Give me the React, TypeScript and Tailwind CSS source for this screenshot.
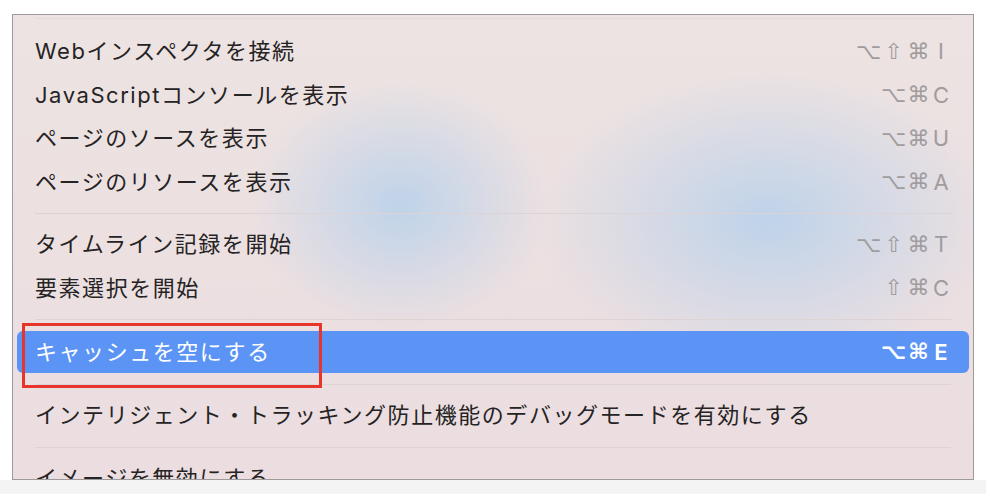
import type { ReactNode } from "react";

type Item = {
  label: string;
  keys: string[];
  active?: boolean;
};

const GROUPS: Item[][] = [
  [
    { label: "Webインスペクタを接続", keys: ["⌥", "⇧", "⌘", "I"] },
    { label: "JavaScriptコンソールを表示", keys: ["⌥", "⌘", "C"] },
    { label: "ページのソースを表示", keys: ["⌥", "⌘", "U"] },
    { label: "ページのリソースを表示", keys: ["⌥", "⌘", "A"] },
  ],
  [
    { label: "タイムライン記録を開始", keys: ["⌥", "⇧", "⌘", "T"] },
    { label: "要素選択を開始", keys: ["⇧", "⌘", "C"] },
  ],
  [{ label: "キャッシュを空にする", keys: ["⌥", "⌘", "E"], active: true }],
  [{ label: "インテリジェント・トラッキング防止機能のデバッグモードを有効にする", keys: [] }],
  [{ label: "イメージを無効にする", keys: [] }],
];

function Shortcut({ keys, active }: { keys: string[]; active?: boolean }) {
  const letter = keys[keys.length - 1];
  const mods = keys.slice(0, -1);
  return (
    <div className={`flex items-center tracking-normal ${active ? "text-white font-bold" : "text-[#a19b9d]"}`}>
      {mods.map((m, i) => (
        <span
          key={i}
          className="w-[25px] text-center leading-none font-['DejaVu_Sans',sans-serif] text-[22px]"
        >
          {m}
        </span>
      ))}
      <span
        className={`w-[20px] text-center font-['Inter',sans-serif] text-[22px] ${
          active ? "font-semibold" : ""
        }`}
      >
        {letter}
      </span>
    </div>
  );
}

function Row({ item }: { item: Item }) {
  if (item.active) {
    return (
      <div className="h-[46px] pt-[2px] px-[4px]">
        <div className="h-[42px] rounded-[6px] bg-[#5b94f5] flex items-center justify-between px-[18px]">
          <span className="text-white whitespace-nowrap">{item.label}</span>
          <Shortcut keys={item.keys} active />
        </div>
      </div>
    );
  }
  return (
    <div className="h-[43.5px] flex items-center justify-between px-[22px]">
      <span className="text-[#252323] whitespace-nowrap">{item.label}</span>
      {item.keys.length > 0 && <Shortcut keys={item.keys} />}
    </div>
  );
}

function Separator() {
  return (
    <div className="h-[19px] flex items-center px-[22px]">
      <div className="h-px w-full bg-[#ddd3d4]" />
    </div>
  );
}

export default function App() {
  const body: ReactNode[] = [];
  GROUPS.forEach((g, gi) => {
    if (gi > 0) body.push(<Separator key={`s${gi}`} />);
    g.forEach((item, ii) => body.push(<Row key={`${gi}-${ii}`} item={item} />));
  });

  return (
    <div className="w-[986px] h-[494px] bg-white flex flex-col">
      <div className="pt-[14px] pl-[12px]">
        <div className="relative w-[962px] h-[466px] border border-[#9c9a9a] overflow-hidden bg-[radial-gradient(ellipse_150px_125px_at_388px_190px,rgba(188,210,234,0.95),rgba(188,210,234,0)),radial-gradient(ellipse_230px_150px_at_755px_205px,rgba(188,210,234,0.95),rgba(188,210,234,0)),linear-gradient(to_bottom,#ede3e2,#ebdde0)]">
          <div className="mx-[22px] mt-[3px] h-px bg-[#e4dada]" />
          <div className="pt-[11px] font-['Inter','Noto_Sans_CJK_JP',sans-serif] text-[22px] tracking-[1.55px]">
            {body}
          </div>
          <div className="absolute left-[9px] top-[308px] w-[300px] h-[65px] border-[3px] border-[#e8352c]" />
        </div>
      </div>
      <div className="flex-1 bg-[#f4f4f4]" />
    </div>
  );
}
